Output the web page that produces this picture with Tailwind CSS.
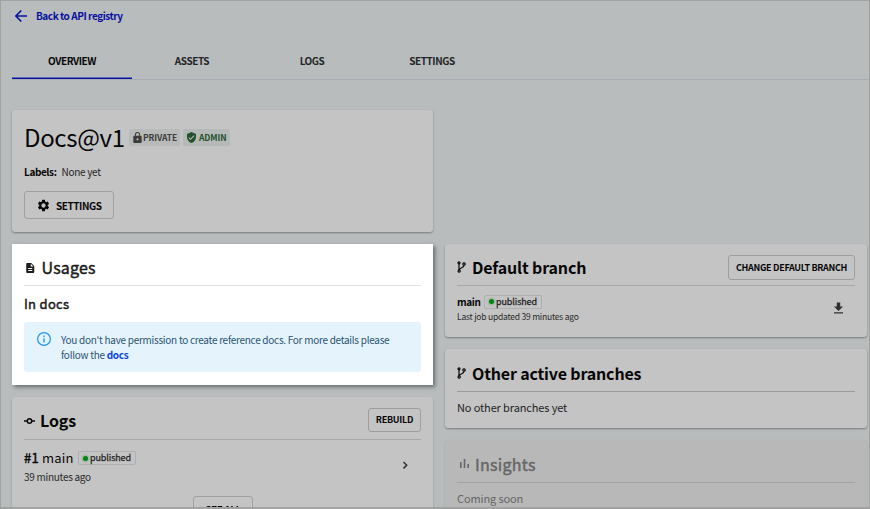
<!DOCTYPE html>
<html lang="en">
<head>
<meta charset="utf-8">
<title>API registry</title>
<script src="https://cdn.jsdelivr.net/npm/@tailwindcss/browser@4"></script>
</head>
<body class="h-[509px] w-[870px] overflow-hidden bg-[#b8bcbd] font-['Noto_Sans_CJK_SC',sans-serif] text-[#070707]">
<div class="relative h-[509px] overflow-hidden border border-[#a2a2a2] pl-[11px]">
  <a class="flex h-[30px] items-center gap-[9px] pl-[3px] text-[#08109d]">
    <svg class="size-3" viewBox="0 0 12 12" fill="none" stroke="currentColor" stroke-width="1.5"><path d="M6.3.4.9 6l5.400 5.600M1 6h11"/></svg>
    <span class="text-[10px] leading-4 font-bold tracking-[-0.45px]">Back to API registry</span>
  </a>
  <nav class="mt-[12px] flex h-[37px] border-b border-[#a6abb4] text-center text-[10px] leading-[35px] font-bold tracking-[-0.45px] text-[#242526]">
    <span class="h-[36px] w-[120px] text-[#070707] shadow-[inset_0_-1.500px_#0b10a4]">OVERVIEW</span>
    <span class="w-[120px]">ASSETS</span>
    <span class="w-[120px]">LOGS</span>
    <span class="w-[120px]">SETTINGS</span>
  </nav>
  <main class="mt-[30px] flex gap-3">
    <div class="flex w-[421px] shrink-0 flex-col gap-3">
      <section class="h-[122px] rounded-[3px] bg-[#c4c4c4] px-3 pt-[11px] shadow-[0_1px_2px_#777b7c]">
        <div class="flex h-[32px] items-center">
          <h1 class="w-[105px] text-[24px] leading-8 tracking-[-0.35px] whitespace-nowrap">Docs@v1</h1>
          <span class="flex h-[17px] w-[51px] items-center rounded-[2px] bg-[#b8b9b9] pl-[4px] text-[8.500px] font-bold tracking-[-0.1px] text-[#3b3b3b]"><svg class="mr-px h-[11px] w-[9px] shrink-0" viewBox="4 1 16 21" fill="currentColor"><path d="M18 8h-1V6A5 5 0 0 0 7 6v2H6a2 2 0 0 0-2 2v10a2 2 0 0 0 2 2h12a2 2 0 0 0 2-2V10a2 2 0 0 0-2-2m-6 9a2 2 0 1 1 0-4 2 2 0 0 1 0 4m3.100-9H8.900V6a3.100 3.100 0 0 1 6.200 0z"/></svg>PRIVATE</span>
          <span class="ml-[3px] flex h-[17px] w-[47px] items-center rounded-[2px] bg-[#b5b9b7] pl-[4px] text-[8.500px] font-bold tracking-[-0.1px] text-[#24512b]"><svg class="mr-[3px] h-[11px] w-[9px] shrink-0" viewBox="3 1 18 22" fill="currentColor"><path d="M12 1 3 5v6c0 5.550 3.840 10.740 9 12 5.160-1.260 9-6.450 9-12V5zm-2 16-4-4 1.410-1.410L10 14.170l6.590-6.590L18 9z"/></svg>ADMIN</span>
        </div>
        <p class="mt-[11px] text-[10px] leading-4 tracking-[-0.3px] text-[#252525]"><b class="mr-[5px] tracking-[-0.4px] text-[#070707]">Labels:</b>None yet</p>
        <button class="mt-[11px] flex h-7 w-[90px] items-center rounded-[3px] border border-[#a0a0a0] pl-3 text-[10px] font-bold tracking-[-0.45px]"><svg class="mr-[6px] size-[13px]" viewBox="1 1 22 22" fill="currentColor"><path d="M19.140 12.940c.04-.3.060-.610.060-.940 0-.320-.020-.640-.070-.940l2.030-1.580a.49.49 0 0 0 .120-.610l-1.920-3.320a.488.488 0 0 0-.590-.220l-2.390.960c-.5-.380-1.030-.7-1.620-.940l-.360-2.540a.484.484 0 0 0-.480-.410h-3.840c-.240 0-.430.170-.470.410l-.360 2.540c-.590.240-1.130.570-1.620.940l-2.390-.960c-.220-.080-.470 0-.590.220L2.740 8.870c-.120.210-.080.470.120.610l2.030 1.580c-.050.3-.090.630-.090.940s.020.640.070.940l-2.030 1.580a.49.49 0 0 0-.120.610l1.920 3.320c.120.220.370.290.590.220l2.390-.960c.5.380 1.030.7 1.620.940l.360 2.540c.050.240.240.410.480.410h3.840c.240 0 .440-.170.470-.410l.360-2.540c.590-.240 1.130-.560 1.620-.940l2.390.960c.220.080.470 0 .590-.220l1.920-3.320c.120-.220.070-.470-.120-.610zM12 15.600c-1.980 0-3.600-1.620-3.600-3.600s1.620-3.600 3.600-3.600 3.600 1.620 3.600 3.600-1.620 3.600-3.600 3.600"/></svg>SETTINGS</button>
      </section>

      <section class="h-[141px] bg-white px-3 pt-[12px] text-[#1b1b1b] shadow-[2px_2px_4px_#666a6b]">
        <div class="flex h-[30px] items-center border-b border-[#e2e2e2] pb-[5px]">
          <svg class="mr-[7px] ml-[2px] h-[10px] w-[8.500px]" viewBox="4 2 16 20" fill="currentColor"><path d="M14 2H6a2 2 0 0 0-2 2v16a2 2 0 0 0 2 2h12a2 2 0 0 0 2-2V8zm2 16H8v-2h8zm0-4H8v-2h8zm-3-5V3.500L18.500 9z"/></svg>
          <h2 class="-mt-[2px] text-[16px] leading-6 tracking-[0.2px] [-webkit-text-stroke:0.45px]">Usages</h2>
        </div>
        <h3 class="mt-[8px] text-[13px] leading-5 tracking-[0.3px] [-webkit-text-stroke:0.45px]">In docs</h3>
        <div class="mt-[8px] flex h-[50px] rounded-[3px] bg-[#e5f3fd] pt-[10px] pl-[13px] text-[10px] leading-[15px] tracking-[-0.280px] text-[#2a536f]">
          <svg class="mr-[10px] size-[14px] text-[#2196f3]" viewBox="2 2 20 20" fill="currentColor"><path d="M11 7h2v2h-2zm0 4h2v6h-2zm1-9a10 10 0 1 0 0 20 10 10 0 0 0 0-20m0 18.300a8.300 8.300 0 1 1 0-16.600 8.300 8.300 0 0 1 0 16.600"/></svg>
          <p class="whitespace-nowrap">You don't have permission to create reference docs. For more details please<br>follow the <b class="text-[#0b46d8]">docs</b></p>
        </div>
      </section>

      <section class="h-[150px] rounded-[3px] bg-[#c4c4c4] px-3 pt-[12px] shadow-[0_1px_2px_#8b8f90]">
        <div class="flex h-[31px] items-center border-b border-[#a8a8a8] pb-[7px]">
          <svg class="mr-[5px] h-[8px] w-[11px]" viewBox="0 0 11 8" fill="none" stroke="currentColor" stroke-width="1.400"><circle cx="5.500" cy="4" r="2.200"/><path d="M0 4h3.300M7.700 4H11"/></svg>
          <h2 class="-mt-[2px] text-[16px] leading-6 font-bold tracking-[-0.1px]">Logs</h2>
          <button class="-mt-[2px] ml-auto h-6 w-[53px] rounded-[3px] border border-[#9e9e9e] text-[9px] leading-[22px] font-bold tracking-[-0.25px]">REBUILD</button>
        </div>
        <div class="flex">
          <div class="flex-1">
            <div class="mt-[8px] flex h-5 items-center"><span class="w-[54px] text-[13px] leading-5 tracking-[0.2px] whitespace-nowrap"><span class="[-webkit-text-stroke:0.4px]">#1</span> main</span><span class="flex h-[14px] w-[58px] items-center rounded-[2px] border border-[#afb0b3] pl-[4px] text-[9px] leading-3 tracking-[-0.1px] text-[#222] [-webkit-text-stroke:0.25px]"><i class="mr-[2px] size-[5px] rounded-full bg-[#078316] shadow-[0_0_3px_#3b9b46]"></i>published</span></div>
            <p class="text-[10px] leading-[18px] tracking-[-0.28px] text-[#292929]">39 minutes ago</p>
          </div>
          <svg class="mt-[20px] mr-[12px] h-[10px] w-[7px] text-[#303030]" viewBox="0 0 7 10" fill="none" stroke="currentColor" stroke-width="1.500"><path d="m1.500 2 3.200 3.200-3.200 3.200"/></svg>
        </div>
        <button class="mt-[10px] ml-[169px] block h-7 w-[60px] rounded-[3px] border border-[#a0a0a0] text-[10px] leading-[26px] font-bold tracking-[-0.45px]">SEE ALL</button>
      </section>
    </div>

    <div class="mt-[134px] flex w-[422px] shrink-0 flex-col gap-3">
      <section class="h-[93px] rounded-[3px] bg-[#c4c4c4] px-3 pt-[12px] shadow-[0_1px_2px_#777b7c]">
        <div class="flex h-[30px] items-center border-b border-[#a8a8a8] pb-[5px]">
          <svg class="-mt-[2px] mr-[6px] h-[12px] w-[9px]" viewBox="0 0 9 12" fill="none" stroke="currentColor" stroke-width="1.200"><circle cx="2" cy="1.800" r="1"/><circle cx="2.200" cy="10" r="1.100"/><circle cx="7" cy="3" r="1.200"/><path d="M2 3v6M7 4.200c0 2.600-4 2.300-4.700 4.600"/></svg>
          <h2 class="-mt-[2px] text-[16px] leading-6 font-bold tracking-[-0.150px]">Default branch</h2>
          <button class="-mt-[2px] ml-auto h-[25px] w-[127px] rounded-[3px] border border-[#9e9e9e] text-[9px] leading-[23px] font-bold tracking-[-0.3px] whitespace-nowrap">CHANGE DEFAULT BRANCH</button>
        </div>
        <div class="flex">
          <div class="flex-1">
            <div class="mt-[8px] flex h-[15px] items-center"><b class="w-[27px] text-[10px] leading-4 tracking-[-0.4px]">main</b><span class="flex h-[14px] w-[58px] items-center rounded-[2px] border border-[#afb0b3] pl-[4px] text-[9px] leading-3 tracking-[-0.1px] text-[#222] [-webkit-text-stroke:0.25px]"><i class="mr-[2px] size-[5px] rounded-full bg-[#078316] shadow-[0_0_3px_#3b9b46]"></i>published</span></div>
            <p class="-mt-px text-[8.500px] leading-4 tracking-[-0.22px] text-[#292929]">Last job updated 39 minutes ago</p>
          </div>
          <svg class="mt-[16px] mr-[12px] h-[12px] w-[9px] text-[#303030]" viewBox="0 0 9 12" fill="currentColor"><path d="M2.800.500h3.400v4H9L4.500 9 0 4.500h2.800zM0 10.300h9v1.200H0z"/></svg>
        </div>
      </section>
      <section class="h-[79px] rounded-[3px] bg-[#c4c4c4] px-3 pt-[12px] shadow-[0_1px_2px_#777b7c]">
        <div class="flex h-[31px] items-center border-b border-[#9c9c9c] pb-[5px]">
          <svg class="-mt-[2px] mr-[6px] h-[12px] w-[9px]" viewBox="0 0 9 12" fill="none" stroke="currentColor" stroke-width="1.200"><circle cx="2" cy="1.800" r="1"/><circle cx="2.200" cy="10" r="1.100"/><circle cx="7" cy="3" r="1.200"/><path d="M2 3v6M7 4.200c0 2.600-4 2.300-4.700 4.600"/></svg>
          <h2 class="-mt-[2px] text-[16px] leading-6 font-bold tracking-[-0.170px]">Other active branches</h2>
        </div>
        <p class="mt-[6px] text-[11px] leading-[18px] tracking-[-0.120px] text-[#1f1f1f]">No other branches yet</p>
      </section>
      <section class="h-[90px] rounded-[3px] bg-[#b8b8b8] px-3 pt-[12px] text-[#666] shadow-[0_1px_2px_#9b9fa0]">
        <div class="flex h-[31px] items-center border-b border-[#a3a3a3] pb-[5px]">
          <svg class="-mt-[2px] mr-[6px] ml-[3px] h-[10px] w-[9px]" viewBox="0 0 9 10" fill="currentColor"><path d="M0 3h1.600v6H0zM3.700 0h1.600v9H3.700zM7.400 5H9v4H7.400z"/></svg>
          <h2 class="-mt-[2px] text-[16px] leading-6 tracking-[0.3px] [-webkit-text-stroke:0.45px]">Insights</h2>
        </div>
        <p class="mt-[6px] text-[11px] leading-[18px] tracking-[-0.120px]">Coming soon</p>
      </section>
    </div>
  </main>
  <div class="absolute inset-x-0 bottom-0 h-px bg-[#a2a2a2]"></div>
</div>
</body>
</html>
